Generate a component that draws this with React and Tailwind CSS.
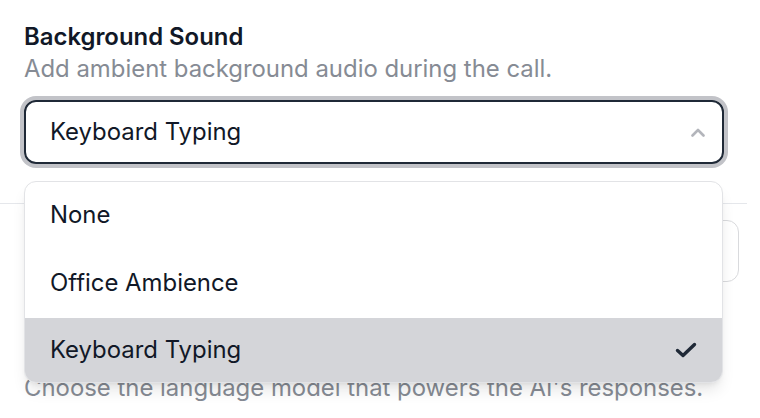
// Background sound select, opened. Everything is drawn at ~1.6x, so sizes are px values.
const OPTIONS = ["None", "Office Ambience", "Keyboard Typing"];
const SELECTED = "Keyboard Typing";

function ChevronUp() {
  return (
    <svg width="14" height="9" viewBox="0 0 14 9" fill="none" className="text-[#b3b5bb]">
      <polyline points="1.5,7.5 7,2 12.5,7.5" stroke="currentColor" strokeWidth="2.6" strokeLinecap="round" strokeLinejoin="round" />
    </svg>
  );
}

function Check() {
  return (
    <svg width="22" height="16" viewBox="0 0 22 16" fill="none" className="text-[#1f2937]">
      <polyline points="2.5,8.5 8,13.5 19.5,2.5" stroke="currentColor" strokeWidth="3.4" strokeLinecap="round" strokeLinejoin="round" />
    </svg>
  );
}

export default function App() {
  return (
    <div className="relative w-[760px] h-[418px] overflow-hidden bg-white font-['Inter','Liberation_Sans',sans-serif] text-[23.9px] leading-[32px]">
      <div className="w-[747px] border-b border-[#e5e7eb] pt-[21px] pb-[39px] pl-6">
        <div className="font-semibold text-[#111827]">Background Sound</div>
        <div className="text-[#868b94]">Add ambient background audio during the call.</div>
        <div className="mt-[15px] w-[700px] h-[64px] rounded-[12px] border-2 border-[#1f2937] ring-[4px] ring-[#c2c3c8] flex items-center justify-between pl-[24px] pr-[17px] text-[#111827]">
          <span>Keyboard Typing</span>
          <ChevronUp />
        </div>
      </div>

      {/* next section, mostly hidden under the listbox */}
      <div className="pl-6">
        <div className="mt-[16px] w-[715px] h-[62px] rounded-[12px] border border-[#d9dadd]" />
        <div className="mt-[90px] text-[#868b94]">Choose the language model that powers the AI's responses.</div>
      </div>

      {/* the open listbox */}
      <div className="absolute top-[181px] left-6 w-[699px] rounded-[12px] border border-[#e2e3e6] bg-white shadow-lg overflow-hidden">
        {OPTIONS.map((opt, i) => {
          const active = opt === SELECTED;
          return (
            <div
              key={opt}
              className={
                "flex items-center justify-between pl-[25px] pr-[25px] text-[#111827] " +
                (i === 0 ? "h-[66px] " : i === 1 ? "h-[70px] " : "h-[64px] ") +
                (active ? "bg-[#d4d5d9]" : "")
              }
            >
              <span>{opt}</span>
              {active && <Check />}
            </div>
          );
        })}
      </div>
    </div>
  );
}
